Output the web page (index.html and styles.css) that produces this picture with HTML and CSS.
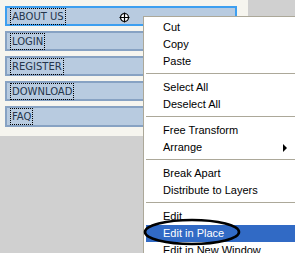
FILE: index.html
```html
<!DOCTYPE html>
<html>
<head>
  <meta charset="UTF-8">
  <title>Nav buttons - context menu</title>
  <link rel="stylesheet" href="styles.css">
</head>
<body>

<div class="panel">
  <div class="nav-btn selected">
    <span class="label">ABOUT US</span>
    <svg class="cursor" width="11" height="11" viewBox="0 0 11 11">
      <circle cx="5.5" cy="5.5" r="4" fill="#fff" stroke="#000" stroke-width="1.2"/>
      <path d="M5.5 0.5v10M0.5 5.5h10" stroke="#000" stroke-width="1.2"/>
    </svg>
  </div>
  <div class="nav-btn"><span class="label">LOGIN</span></div>
  <div class="nav-btn"><span class="label">REGISTER</span></div>
  <div class="nav-btn"><span class="label">DOWNLOAD</span></div>
  <div class="nav-btn"><span class="label">FAQ</span></div>
</div>

<ul class="context-menu">
  <li class="menu-item">Cut</li>
  <li class="menu-item">Copy</li>
  <li class="menu-item">Paste</li>
  <li class="menu-sep"></li>
  <li class="menu-item">Select All</li>
  <li class="menu-item">Deselect All</li>
  <li class="menu-sep"></li>
  <li class="menu-item">Free Transform</li>
  <li class="menu-item"><span class="menu-text">Arrange</span><span class="submenu-arrow"></span></li>
  <li class="menu-sep"></li>
  <li class="menu-item">Break Apart</li>
  <li class="menu-item">Distribute to Layers</li>
  <li class="menu-sep"></li>
  <li class="menu-item">Edit</li>
  <li class="menu-item active">Edit in Place</li>
  <li class="menu-item">Edit in New Window</li>
</ul>

<!-- hand drawn circle around the highlighted item -->
<svg class="callout" width="100" height="32" viewBox="0 0 100 32">
  <ellipse cx="49" cy="14" rx="47" ry="12" fill="none" stroke="#000" stroke-width="2.6"/>
</svg>

</body>
</html>
```

FILE: styles.css
```css
html, body {
  margin: 0;
  padding: 0;
}
*, *:before, *:after {
  box-sizing: border-box;
}
body {
  background-color: #d0d0d0;
  width: 295px;
  height: 253px;
  overflow: hidden;
  position: relative;
}
.panel {
  width: 248px;
  height: 136px;
  background-color: #f6f5ef;
  padding: 6px 0 0 5px;
  display: flex;
  flex-direction: column;
  gap: 5px;
}
.nav-btn {
  width: 232px;
  height: 20px;
  background-color: #b8cbe0;
  border: 2px solid #87a2c3;
  padding-left: 3px;
  display: flex;
  align-items: flex-start;
  position: relative;
}
.nav-btn:last-child {
  height: 21px;
}
.nav-btn.selected {
  border-color: #3d9ff0;
}
.label {
  height: 17px;
  border: 1px dotted #000;
  padding: 0 1px;
  font-family: "DejaVu Sans", sans-serif;
  font-size: 10px;
  line-height: 15px;
  color: #24354b;
  white-space: nowrap;
}
.cursor {
  position: absolute;
  left: 112px;
  top: 4px;
}
.context-menu {
  position: absolute;
  left: 143px;
  top: 16px;
  width: 170px;
  margin: 0;
  padding: 2px;
  list-style: none;
  background-color: #fff;
  border: 1px solid #aca899;
  font-family: "Liberation Sans", Arial, sans-serif;
  font-size: 11px;
  color: #000;
}
.menu-item {
  height: 17px;
  line-height: 17px;
  padding-left: 17px;
  display: flex;
  align-items: center;
  white-space: nowrap;
}
.menu-item.active {
  background-color: #316ac5;
  color: #fff;
}
.menu-text {
  width: 120px;
}
.submenu-arrow {
  width: 0;
  height: 0;
  border-left: 4px solid #000;
  border-top: 4px solid transparent;
  border-bottom: 4px solid transparent;
}
.menu-sep {
  height: 1px;
  margin: 3px 0 5px;
  background-color: #aca899;
}
.callout {
  position: absolute;
  left: 143px;
  top: 218px;
}
```
